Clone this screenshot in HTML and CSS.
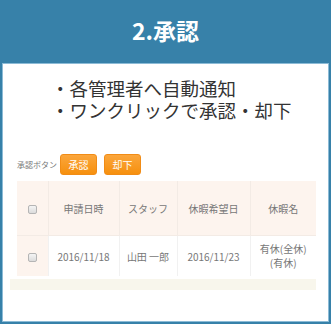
FILE: index.html
```html
<!DOCTYPE html>
<html>
<head>
    <title>承認</title>
    <link rel="stylesheet" href="styles.css">
</head>
<body>
    <div class="card">
        <h1 class="card-title">2.承認</h1>
        <div class="panel">
            <ul class="points">
                <li>・各管理者へ自動通知</li>
                <li>・ワンクリックで承認・却下</li>
            </ul>
            <div class="toolbar">
                <span class="toolbar-label">承認ボタン</span>
                <button class="btn">承認</button>
                <button class="btn">却下</button>
            </div>
            <table class="requests">
                <colgroup>
                    <col style="width: 31px">
                    <col style="width: 71px">
                    <col style="width: 58px">
                    <col style="width: 73px">
                    <col style="width: 66px">
                </colgroup>
                <thead>
                    <tr>
                        <th class="check"><span class="box"></span></th>
                        <th>申請日時</th>
                        <th>スタッフ</th>
                        <th>休暇希望日</th>
                        <th>休暇名</th>
                    </tr>
                </thead>
                <tbody>
                    <tr>
                        <td class="check"><span class="box"></span></td>
                        <td>2016/11/18</td>
                        <td>山田 一郎</td>
                        <td>2016/11/23</td>
                        <td class="leave">有休(全休)<br>(有休)</td>
                    </tr>
                </tbody>
            </table>
            <div class="table-foot"></div>
        </div>
    </div>
</body>
</html>
```

FILE: styles.css
```css
body {
    margin: 0;
    font-family: "Noto Sans CJK JP", "Noto Sans", sans-serif;
}
.card {
    width: 331px;
    height: 324px;
    box-sizing: border-box;
    background-color: #3781a9;
    padding: 0 3px 3px 3px;
    display: flex;
    flex-direction: column;
}
.card-title {
    height: 64px;
    margin: 0;
    color: white;
    font-size: 23px;
    font-weight: bold;
    line-height: 60px;
    text-align: center;
}
.panel {
    flex: 1;
    background-color: white;
    box-shadow: 0 0 0 1px #8cbbd6;
    padding-top: 13px;
}
.points {
    list-style: none;
    margin: 0;
    padding: 0 0 0 48px;
    font-size: 18.5px;
    line-height: 22px;
    color: #333;
}
.toolbar {
    display: flex;
    align-items: center;
    margin: 33px 0 0 14px;
    height: 21px;
}
.toolbar-label {
    font-size: 8px;
    color: #777;
    margin-right: 3px;
}
.btn {
    width: 37px;
    height: 21px;
    margin-right: 7px;
    padding: 0;
    border: 1px solid #f18c16;
    border-radius: 3px;
    background: linear-gradient(#fba63c, #f6900e);
    color: white;
    font-family: inherit;
    font-size: 10px;
}
.requests {
    margin: 6px 0 0 14px;
    width: 299px;
    table-layout: fixed;
    border-collapse: collapse;
    font-size: 10px;
    color: #777;
    text-align: center;
}
.requests th {
    height: 54px;
    padding: 0;
    font-weight: normal;
    background-color: #fdf4ee;
    border-left: 1px solid #f3ebe5;
    border-bottom: 1px solid #f3ebe5;
}
.requests td {
    height: 40px;
    padding: 0;
    border-left: 1px solid #f1f1f1;
}
.requests th:first-child,
.requests td:first-child {
    border-left: none;
}
.requests td.check {
    background-color: #fdf4ee;
}
.leave {
    line-height: 14px;
}
.box {
    display: inline-block;
    width: 7px;
    height: 7px;
    border: 1px solid #b5b5b5;
    border-radius: 2px;
    background: linear-gradient(#f4f4f4, #dcdcdc);
    vertical-align: middle;
}
.table-foot {
    margin: 3px 12px 0 7px;
    height: 11px;
    background-color: #f8f6ec;
}
```
